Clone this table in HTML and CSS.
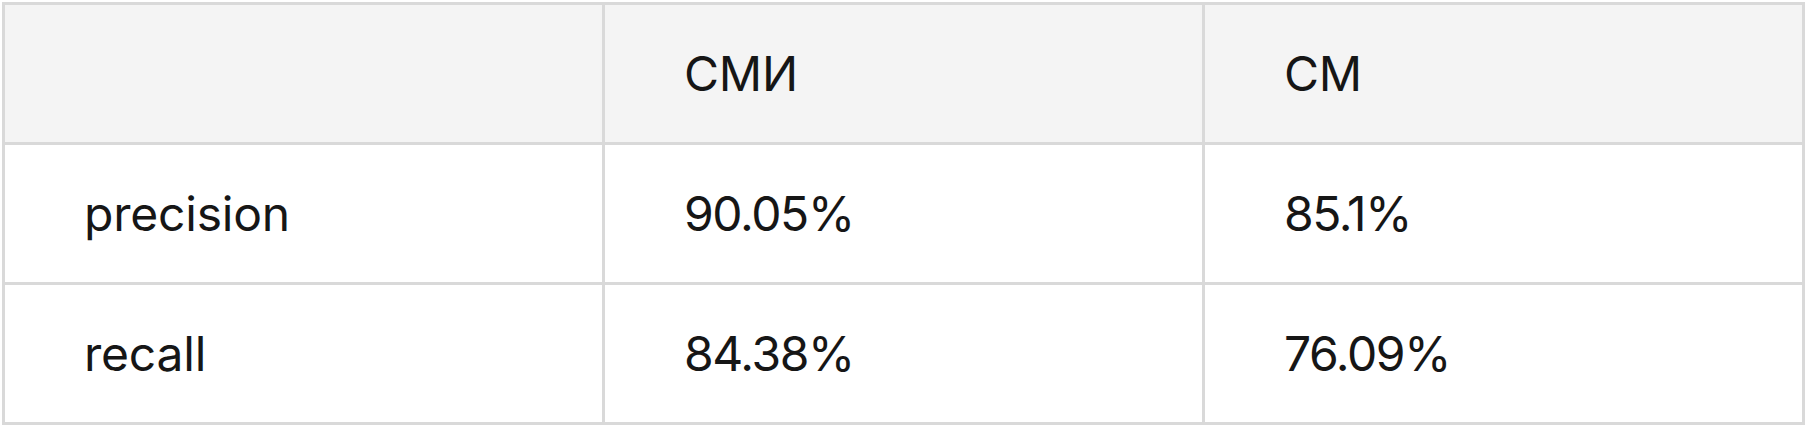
FILE: index.html
```html
<!DOCTYPE html>
<html lang="en">
<head>
  <meta charset="UTF-8">
  <title>Metrics</title>
  <link rel="stylesheet" href="styles.css">
</head>
<body>
  <table class="metrics">
    <thead>
      <tr>
        <th></th>
        <th>СМИ</th>
        <th>СМ</th>
      </tr>
    </thead>
    <tbody>
      <tr>
        <td>precision</td>
        <td class="num">90.05%</td>
        <td class="num">85.1%</td>
      </tr>
      <tr>
        <td>recall</td>
        <td class="num">84.38%</td>
        <td class="num">76.09%</td>
      </tr>
    </tbody>
  </table>
</body>
</html>
```

FILE: styles.css
```css
/* Plain grey-ruled comparison table */
body {
  margin: 2px 0 0 2px;
  background-color: #ffffff;
  color: #161616;
  font-family: Inter, "Noto Sans", Arial, sans-serif;
}
.metrics {
  width: 100%;
  table-layout: fixed;
  border-collapse: collapse;
}
.metrics th,
.metrics td {
  border: 3px solid #d9d9d9;
  padding: 40px 77px 40px 79px;
  font-size: 48px;
  font-weight: 400;
  line-height: 57px;
  text-align: left;
  letter-spacing: -0.2px;
}
.metrics thead th {
  background-color: #f4f4f4;
}
.metrics .num {
  letter-spacing: -1.4px;
}
```
